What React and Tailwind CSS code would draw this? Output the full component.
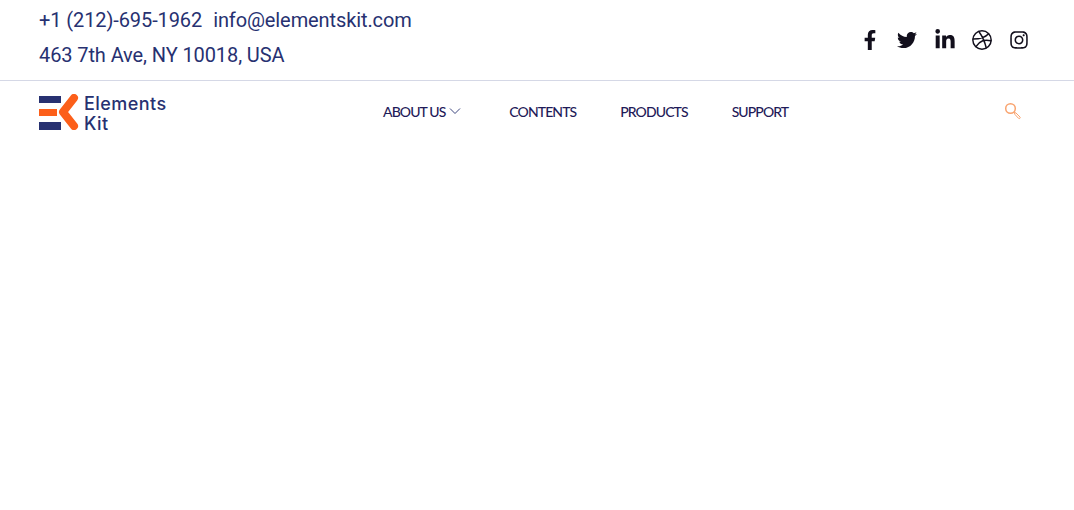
import React from "react";
import { FaFacebookF, FaTwitter, FaLinkedinIn, FaInstagram } from "react-icons/fa";
import { FiDribbble } from "react-icons/fi";

function Logo() {
  return (
    <div className="flex items-center gap-[5px]">
      <svg width="40" height="36" viewBox="0 0 40 36" className="block">
        <rect x="0" y="2" width="22" height="7" fill="#273171" />
        <rect x="0" y="15" width="18" height="7" fill="#fc5f1a" />
        <rect x="0" y="28" width="22" height="8" fill="#273171" />
        <path d="M35 4 L24 18 L35 32" fill="none" stroke="#fc5f1a" strokeWidth="8" strokeLinecap="round" strokeLinejoin="round" />
      </svg>
      <div className="font-['Inter',sans-serif] font-medium text-[18px] leading-[20px] tracking-[0.45px] text-[#273171] pt-[3px]">
        <div>Elements</div>
        <div>Kit</div>
      </div>
    </div>
  );
}

function NavItem({ children, chevron }) {
  return (
    <a className={`flex items-center gap-[4px] text-[14px] tracking-[-0.9px] text-[#1f1b59] font-medium ${chevron ? "pr-[4px]" : ""}`}>
      {children}
      {chevron && (
        <svg width="12" height="12" viewBox="0 0 12 12" fill="none" stroke="#273171" strokeWidth="0.9">
          <path d="M1 3.5 L6 8.5 L11 3.5" />
        </svg>
      )}
    </a>
  );
}

export default function App() {
  return (
    <div className="min-h-[510px] bg-white font-['Roboto',sans-serif]">
      <header className="flex items-center justify-between h-[81px] pl-[39px] pr-[45px] border-b border-[#d5d8e6]">
        <div className="text-[20px] leading-[35px] tracking-[-0.1px] text-[#273171] pb-[4px]">
          <div className="flex gap-[11px]">
            <span>+1 (212)-695-1962</span>
            <span>info@elementskit.com</span>
          </div>
          <div>463 7th Ave, NY 10018, USA</div>
        </div>
        <div className="flex items-center gap-[16px] text-[#120f1c]">
          <FaFacebookF size={20} />
          <FaTwitter size={20} className="ml-[1px]" />
          <FaLinkedinIn size={22} className="ml-[1px] -mr-[1px]" />
          <FiDribbble size={22} strokeWidth={1.6} />
          <FaInstagram size={20} />
        </div>
      </header>
      <nav className="flex items-center h-[62px] pl-[39px] pr-[52px] font-['Lato',sans-serif]">
        <div className="w-[344px] shrink-0">
          <Logo />
        </div>
        <div className="flex flex-1 items-center gap-[44px] pb-[2px]">
          <NavItem chevron>ABOUT US</NavItem>
          <NavItem>CONTENTS</NavItem>
          <NavItem>PRODUCTS</NavItem>
          <NavItem>SUPPORT</NavItem>
        </div>
        <svg width="18" height="18" viewBox="0 0 18 18" fill="none" stroke="#f9a36e" strokeWidth="1.5" className="mb-[2px]">
          <circle cx="6.5" cy="6.5" r="4.8" />
          <path d="M10.3 10.3 L12 11 L16 15 A1 1 0 0 1 14.6 16.4 L10.8 12.3 Z" strokeWidth="1" />
        </svg>
      </nav>
    </div>
  );
}
